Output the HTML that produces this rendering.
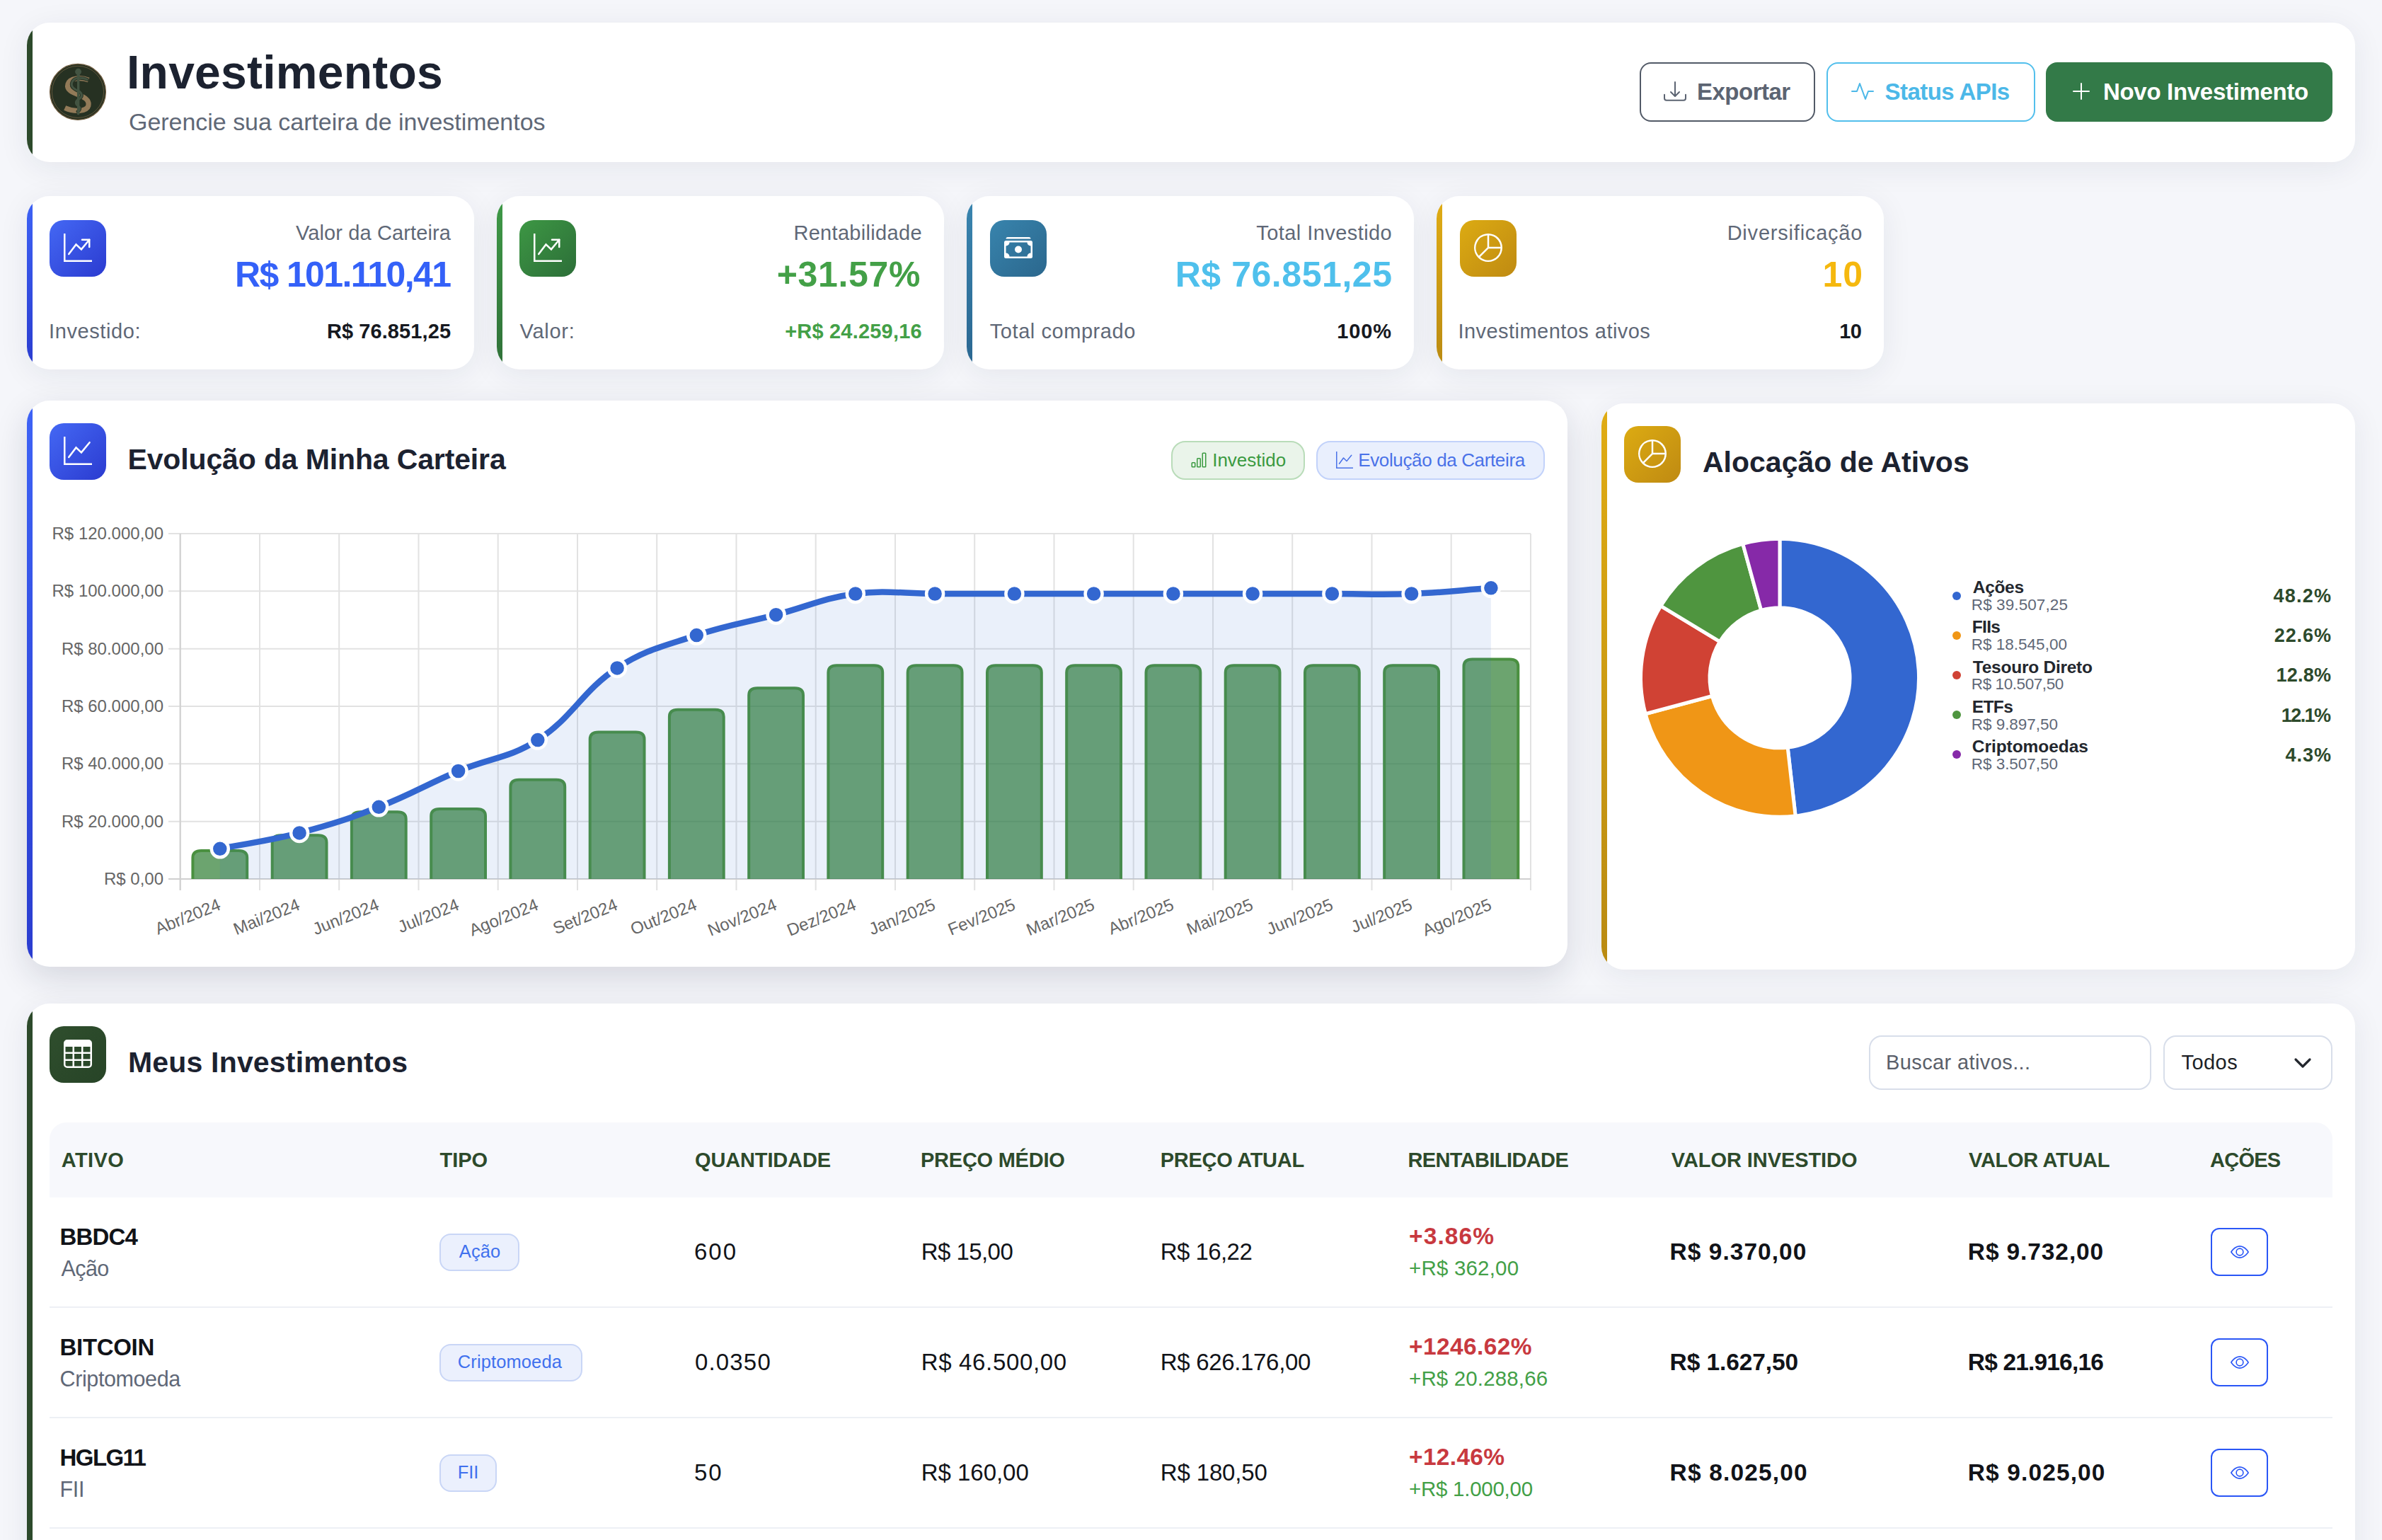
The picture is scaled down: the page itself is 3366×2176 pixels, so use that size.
<!DOCTYPE html>
<html><head><meta charset="utf-8"><style>
html,body{margin:0;padding:0}
body{width:3366px;height:2176px;position:relative;overflow:hidden;background:#f5f6fa;font-family:"Liberation Sans", sans-serif}
.t{position:absolute;white-space:nowrap;font-family:"Liberation Sans", sans-serif}
.abs{position:absolute}
.card{position:absolute;background:#fff;box-shadow:0 8px 44px rgba(30,40,70,0.075);overflow:hidden}
.bl{position:absolute;left:0;top:0;bottom:0;width:8px}
.ib{position:absolute;overflow:hidden}
.btn{position:absolute;box-sizing:border-box;border-radius:16px}
.pill{position:absolute;box-sizing:border-box;border-radius:20px}
.inp{position:absolute;box-sizing:border-box;border:2px solid #d8deea;border-radius:18px;background:#fff}
.badge{position:absolute;box-sizing:border-box;border:2px solid #c9d6f6;background:#ebf0fd;border-radius:16px}
.eye{position:absolute;box-sizing:border-box;border:2.5px solid #2a56f6;border-radius:12px}
.xl{transform-origin:100% 0;transform:rotate(-22deg)}
</style></head><body>
<div class="card" style="left:38px;top:32px;width:3290px;height:197px;border-radius:32px;"><div class="bl" style="background:#2d4a2b"></div></div>
<svg class="abs" style="left:66px;top:85px" width="88" height="88" viewBox="0 0 1540 1540">
<circle cx="770" cy="785" r="690" fill="#263122" stroke="#6f5a3d" stroke-width="22"/>
<circle cx="770" cy="785" r="640" fill="none" stroke="#7d6747" stroke-width="12"/>
<path d="M1035,490 C860,420 575,430 525,590 C480,740 640,800 820,872 C1000,945 1055,1020 1030,1130 C990,1270 690,1290 450,1180" fill="none" stroke="#927a58" stroke-width="125"/>
<path d="M1000,480 C900,430 700,420 640,520 C580,620 640,700 780,760 C880,810 900,900 800,960 C700,1010 700,1090 790,1140 C840,1180 820,1240 770,1270" fill="none" stroke="#263122" stroke-width="85" stroke-linecap="round"/>
<rect x="752" y="330" width="58" height="1020" rx="20" fill="#435442"/>
<circle cx="780" cy="285" r="78" fill="#435442"/>
<rect x="745" y="330" width="72" height="70" rx="20" fill="#435442"/>
<path d="M1000,480 C900,430 700,420 640,520 C580,620 640,700 780,760 C880,810 900,900 800,960 C700,1010 700,1090 790,1140 C840,1180 820,1240 770,1270" fill="none" stroke="#435442" stroke-width="52" stroke-linecap="round"/>
<rect x="752" y="420" width="58" height="930" rx="20" fill="#435442" opacity="0.55"/>
</svg>
<div class="t" style="left:179.0px;top:68.9px;font-size:66px;line-height:66px;font-weight:700;color:#1c2230;letter-spacing:0.24px;">Investimentos</div>
<div class="t" style="left:182.0px;top:155.1px;font-size:34px;line-height:34px;font-weight:400;color:#5f6877;letter-spacing:-0.03px;">Gerencie sua carteira de investimentos</div>
<div class="btn" style="left:2317px;top:88px;width:247.5px;height:84px;border:2px solid #525a67;color:#5c6472"></div>
<svg class="abs" style="left:2350.5px;top:113px" width="32" height="32" viewBox="0 0 16 16"><path fill="#5c6472" d="M.5 9.9a.5.5 0 0 1 .5.5v2.5a1 1 0 0 0 1 1h12a1 1 0 0 0 1-1v-2.5a.5.5 0 0 1 1 0v2.5a2 2 0 0 1-2 2H2a2 2 0 0 1-2-2v-2.5a.5.5 0 0 1 .5-.5z M7.646 11.854a.5.5 0 0 0 .708 0l3-3a.5.5 0 0 0-.708-.708L8.5 10.293V1.5a.5.5 0 0 0-1 0v8.793L5.354 8.146a.5.5 0 1 0-.708.708l3 3z"/></svg>
<div class="t" style="left:2398.0px;top:113.0px;font-size:33px;line-height:33px;font-weight:700;color:#5c6472;letter-spacing:-0.50px;">Exportar</div>
<div class="btn" style="left:2581px;top:88px;width:294.5px;height:84px;border:2px solid #52bfec"></div>
<svg class="abs" style="left:2615.5px;top:112.5px" width="32" height="32" viewBox="0 0 16 16"><path fill="#4cb8e8" d="M6 2a.5.5 0 0 1 .47.33L10 12.036l1.53-4.208A.5.5 0 0 1 12 7.5h3.5a.5.5 0 0 1 0 1h-3.15l-1.88 5.17a.5.5 0 0 1-.94 0L6 3.964 4.47 8.171A.5.5 0 0 1 4 8.5H.5a.5.5 0 0 1 0-1h3.15l1.88-5.17A.5.5 0 0 1 6 2Z"/></svg>
<div class="t" style="left:2663.5px;top:113.0px;font-size:33px;line-height:33px;font-weight:700;color:#4cb8e8;letter-spacing:-0.55px;">Status APIs</div>
<div class="btn" style="left:2891px;top:88px;width:405px;height:84px;background:#337a48"></div>
<svg class="abs" style="left:2925px;top:113px" width="32" height="32" viewBox="0 0 16 16"><path fill="#fff" fill-rule="evenodd" d="M8 2a.5.5 0 0 1 .5.5v5h5a.5.5 0 0 1 0 1h-5v5a.5.5 0 0 1-1 0v-5h-5a.5.5 0 0 1 0-1h5v-5A.5.5 0 0 1 8 2Z"/></svg>
<div class="t" style="left:2972.0px;top:113.0px;font-size:33px;line-height:33px;font-weight:700;color:#fff;letter-spacing:-0.31px;">Novo Investimento</div>
<div class="card" style="left:38px;top:277px;width:632px;height:245px;border-radius:32px;"><div class="bl" style="background:linear-gradient(180deg,#3e63f6,#2a3ccf)"></div></div>
<div class="ib" style="left:70px;top:311px;width:80px;height:80px;border-radius:20px;background:linear-gradient(135deg,#4468f4,#2b3bd0)"><svg width="40" height="40" viewBox="0 0 16 16" style="position:absolute;left:20px;top:19px"><path fill="#fff" d="M0 0h1v15h15v1H0z"/><polyline points="2.88,11.6 7.0,6.15 9.97,8.96 14.5,3.5" fill="none" stroke="#fff" stroke-width="1" stroke-linecap="round" stroke-linejoin="miter"/><polyline points="10.4,3.47 14.5,3.47 14.5,7.63" fill="none" stroke="#fff" stroke-width="1" stroke-linecap="round" stroke-linejoin="round"/></svg></div>
<div class="t" style="right:2728.9px;top:315.4px;font-size:29px;line-height:29px;font-weight:400;color:#5f6877;letter-spacing:0.12px;">Valor da Carteira</div>
<div class="t" style="right:2729.6px;top:362.5px;font-size:50px;line-height:50px;font-weight:700;color:#3461f8;letter-spacing:-1.60px;">R$ 101.110,41</div>
<div class="t" style="left:69.0px;top:454.4px;font-size:29px;line-height:29px;font-weight:400;color:#5f6877;letter-spacing:0.61px;">Investido:</div>
<div class="t" style="right:2728.9px;top:454.4px;font-size:29px;line-height:29px;font-weight:700;color:#16191f;letter-spacing:0.09px;">R$ 76.851,25</div>
<div class="card" style="left:702px;top:277px;width:632px;height:245px;border-radius:32px;"><div class="bl" style="background:linear-gradient(180deg,#3f9a47,#2f7038)"></div></div>
<div class="ib" style="left:734px;top:311px;width:80px;height:80px;border-radius:20px;background:linear-gradient(135deg,#3d9744,#2c6e38)"><svg width="40" height="40" viewBox="0 0 16 16" style="position:absolute;left:20px;top:19px"><path fill="#fff" d="M0 0h1v15h15v1H0z"/><polyline points="2.88,11.6 7.0,6.15 9.97,8.96 14.5,3.5" fill="none" stroke="#fff" stroke-width="1" stroke-linecap="round" stroke-linejoin="miter"/><polyline points="10.4,3.47 14.5,3.47 14.5,7.63" fill="none" stroke="#fff" stroke-width="1" stroke-linecap="round" stroke-linejoin="round"/></svg></div>
<div class="t" style="right:2063.1px;top:315.4px;font-size:29px;line-height:29px;font-weight:400;color:#5f6877;letter-spacing:0.32px;">Rentabilidade</div>
<div class="t" style="right:2064.9px;top:362.5px;font-size:50px;line-height:50px;font-weight:700;color:#43a047;letter-spacing:0.67px;">+31.57%</div>
<div class="t" style="left:734.6px;top:454.4px;font-size:29px;line-height:29px;font-weight:400;color:#5f6877;letter-spacing:0.70px;">Valor:</div>
<div class="t" style="right:2063.2px;top:454.4px;font-size:29px;line-height:29px;font-weight:700;color:#43a047;letter-spacing:0.20px;">+R$ 24.259,16</div>
<div class="card" style="left:1366px;top:277px;width:632px;height:245px;border-radius:32px;"><div class="bl" style="background:linear-gradient(180deg,#3a86b0,#2a6690)"></div></div>
<div class="ib" style="left:1399px;top:311px;width:80px;height:80px;border-radius:20px;background:linear-gradient(135deg,#3884ad,#2b678d)"><svg width="40" height="40" viewBox="0 0 16 16" style="position:absolute;left:20px;top:19.3px"><path fill="#fff" fill-rule="evenodd" d="M1 3a1 1 0 0 1 1-1h12a1 1 0 0 1 1 1H1zm7 8a2 2 0 1 0 0-4 2 2 0 0 0 0 4z M0 5a1 1 0 0 1 1-1h14a1 1 0 0 1 1 1v8a1 1 0 0 1-1 1H1a1 1 0 0 1-1-1V5zm3 0a2 2 0 0 1-2 2v4a2 2 0 0 1 2 2h10a2 2 0 0 1 2-2V7a2 2 0 0 1-2-2H3z"/></svg></div>
<div class="t" style="right:1398.8px;top:315.4px;font-size:29px;line-height:29px;font-weight:400;color:#5f6877;letter-spacing:0.44px;">Total Investido</div>
<div class="t" style="right:1398.4px;top:362.5px;font-size:50px;line-height:50px;font-weight:700;color:#4fc0ec;letter-spacing:0.56px;">R$ 76.851,25</div>
<div class="t" style="left:1398.8px;top:454.4px;font-size:29px;line-height:29px;font-weight:400;color:#5f6877;letter-spacing:0.56px;">Total comprado</div>
<div class="t" style="right:1399.2px;top:454.4px;font-size:29px;line-height:29px;font-weight:700;color:#16191f;letter-spacing:0.83px;">100%</div>
<div class="card" style="left:2030px;top:277px;width:632px;height:245px;border-radius:32px;"><div class="bl" style="background:linear-gradient(180deg,#e0ac14,#b98a12)"></div></div>
<div class="ib" style="left:2063px;top:311px;width:80px;height:80px;border-radius:20px;background:linear-gradient(135deg,#dcab12,#bf8a12)"><svg width="40" height="40" viewBox="0 0 16 16" style="position:absolute;left:20px;top:19.3px"><path fill="#fff" fill-rule="evenodd" d="M7.5 1.018a7 7 0 0 0-4.79 11.566L7.5 7.793V1.018zm1 0V7.5h6.482A7.001 7.001 0 0 0 8.5 1.018zM14.982 8.5H8.207l-4.79 4.79A7 7 0 0 0 14.982 8.5zM0 8a8 8 0 1 1 16 0A8 8 0 0 1 0 8z"/></svg></div>
<div class="t" style="right:733.8px;top:315.4px;font-size:29px;line-height:29px;font-weight:400;color:#5f6877;letter-spacing:0.79px;">Diversificação</div>
<div class="t" style="right:733.0px;top:362.5px;font-size:50px;line-height:50px;font-weight:700;color:#f5b80e;letter-spacing:1.00px;">10</div>
<div class="t" style="left:2060.4px;top:454.4px;font-size:29px;line-height:29px;font-weight:400;color:#5f6877;letter-spacing:0.46px;">Investimentos ativos</div>
<div class="t" style="right:735.4px;top:454.4px;font-size:29px;line-height:29px;font-weight:700;color:#16191f;letter-spacing:-0.40px;">10</div>
<div class="card" style="left:38px;top:566px;width:2177px;height:800px;border-radius:32px;box-shadow:0 16px 48px rgba(20,30,60,0.14)"><div class="bl" style="background:linear-gradient(180deg,#3e63f6,#2a3ccf)"></div></div>
<div class="ib" style="left:70px;top:598px;width:80px;height:80px;border-radius:20px;background:linear-gradient(135deg,#4468f4,#2b3bd0)"><svg width="40" height="40" viewBox="0 0 16 16" style="position:absolute;left:20px;top:19px"><path fill="#fff" d="M0 0h1v15h15v1H0z"/><polyline points="2.88,11.6 7.0,6.15 9.97,8.96 14.64,3.27" fill="none" stroke="#fff" stroke-width="1" stroke-linecap="round" stroke-linejoin="miter"/></svg></div>
<div class="t" style="left:180.5px;top:629.1px;font-size:41px;line-height:41px;font-weight:700;color:#1c2230;letter-spacing:-0.14px;">Evolução da Minha Carteira</div>
<div class="pill" style="left:1655px;top:623px;width:189px;height:54.5px;background:#eaf4ea;border:2px solid #b9dcb9"></div>
<svg class="abs" style="left:1681.7px;top:638px" width="24" height="24" viewBox="0 0 16 16"><path fill="#3a9a40" d="M4 11H2v3h2v-3zm5-4H7v7h2V7zm5-5v12h-2V2h2zm-2-1a1 1 0 0 0-1 1v12a1 1 0 0 0 1 1h2a1 1 0 0 0 1-1V2a1 1 0 0 0-1-1h-2zM6 7a1 1 0 0 1 1-1h2a1 1 0 0 1 1 1v7a1 1 0 0 1-1 1H7a1 1 0 0 1-1-1V7zm-5 4a1 1 0 0 1 1-1h2a1 1 0 0 1 1 1v3a1 1 0 0 1-1 1H2a1 1 0 0 1-1-1v-3z"/></svg>
<div class="t" style="left:1713.2px;top:637.0px;font-size:26px;line-height:26px;font-weight:400;color:#3a9a40;">Investido</div>
<div class="pill" style="left:1860px;top:623px;width:322.5px;height:54.5px;background:#e9effd;border:2px solid #c2d2fa"></div>
<svg class="abs" style="left:1888.4px;top:637.5px" width="24" height="24" viewBox="0 0 16 16"><path fill="#4a72e8" d="M0 0h1v15h15v1H0V0Zm14.817 3.113a.5.5 0 0 1 .07.704l-4.5 5.5a.5.5 0 0 1-.74.037L7.06 6.767l-3.656 5.027a.5.5 0 0 1-.808-.588l4-5.5a.5.5 0 0 1 .758-.06l2.609 2.61 4.15-5.073a.5.5 0 0 1 .704-.07Z"/></svg>
<div class="t" style="left:1919.2px;top:637.0px;font-size:26px;line-height:26px;font-weight:400;color:#4a72e8;letter-spacing:-0.36px;">Evolução da Carteira</div>
<svg class="abs" style="left:0;top:0" width="3366" height="1400" viewBox="0 0 3366 1400">
<line x1="238" y1="1242.0" x2="2163.0" y2="1242.0" stroke="#e2e2e2" stroke-width="2"/>
<line x1="238" y1="1160.7" x2="2163.0" y2="1160.7" stroke="#e2e2e2" stroke-width="2"/>
<line x1="238" y1="1079.3" x2="2163.0" y2="1079.3" stroke="#e2e2e2" stroke-width="2"/>
<line x1="238" y1="998.0" x2="2163.0" y2="998.0" stroke="#e2e2e2" stroke-width="2"/>
<line x1="238" y1="916.7" x2="2163.0" y2="916.7" stroke="#e2e2e2" stroke-width="2"/>
<line x1="238" y1="835.3" x2="2163.0" y2="835.3" stroke="#e2e2e2" stroke-width="2"/>
<line x1="238" y1="754.0" x2="2163.0" y2="754.0" stroke="#e2e2e2" stroke-width="2"/>
<line x1="254.7" y1="754.0" x2="254.7" y2="1258.0" stroke="#e2e2e2" stroke-width="2"/>
<line x1="367.0" y1="754.0" x2="367.0" y2="1258.0" stroke="#e2e2e2" stroke-width="2"/>
<line x1="479.2" y1="754.0" x2="479.2" y2="1258.0" stroke="#e2e2e2" stroke-width="2"/>
<line x1="591.5" y1="754.0" x2="591.5" y2="1258.0" stroke="#e2e2e2" stroke-width="2"/>
<line x1="703.7" y1="754.0" x2="703.7" y2="1258.0" stroke="#e2e2e2" stroke-width="2"/>
<line x1="816.0" y1="754.0" x2="816.0" y2="1258.0" stroke="#e2e2e2" stroke-width="2"/>
<line x1="928.2" y1="754.0" x2="928.2" y2="1258.0" stroke="#e2e2e2" stroke-width="2"/>
<line x1="1040.5" y1="754.0" x2="1040.5" y2="1258.0" stroke="#e2e2e2" stroke-width="2"/>
<line x1="1152.7" y1="754.0" x2="1152.7" y2="1258.0" stroke="#e2e2e2" stroke-width="2"/>
<line x1="1265.0" y1="754.0" x2="1265.0" y2="1258.0" stroke="#e2e2e2" stroke-width="2"/>
<line x1="1377.2" y1="754.0" x2="1377.2" y2="1258.0" stroke="#e2e2e2" stroke-width="2"/>
<line x1="1489.5" y1="754.0" x2="1489.5" y2="1258.0" stroke="#e2e2e2" stroke-width="2"/>
<line x1="1601.7" y1="754.0" x2="1601.7" y2="1258.0" stroke="#e2e2e2" stroke-width="2"/>
<line x1="1714.0" y1="754.0" x2="1714.0" y2="1258.0" stroke="#e2e2e2" stroke-width="2"/>
<line x1="1826.2" y1="754.0" x2="1826.2" y2="1258.0" stroke="#e2e2e2" stroke-width="2"/>
<line x1="1938.5" y1="754.0" x2="1938.5" y2="1258.0" stroke="#e2e2e2" stroke-width="2"/>
<line x1="2050.7" y1="754.0" x2="2050.7" y2="1258.0" stroke="#e2e2e2" stroke-width="2"/>
<line x1="2163.0" y1="754.0" x2="2163.0" y2="1258.0" stroke="#e2e2e2" stroke-width="2"/>
<line x1="254.7" y1="754.0" x2="254.7" y2="1258.0" stroke="#d0d0d0" stroke-width="2"/>
<line x1="238" y1="1242.0" x2="2163.0" y2="1242.0" stroke="#d0d0d0" stroke-width="2"/>
<path d="M272.4,1242.0 V1212.1 Q272.4,1202.1 284.4,1202.1 H337.2 Q349.2,1202.1 349.2,1212.1 V1242.0" fill="rgba(46,125,50,0.7)" stroke="#4a9040" stroke-width="4"/>
<path d="M384.7,1242.0 V1190.2 Q384.7,1180.2 396.7,1180.2 H449.5 Q461.5,1180.2 461.5,1190.2 V1242.0" fill="rgba(46,125,50,0.7)" stroke="#4a9040" stroke-width="4"/>
<path d="M496.9,1242.0 V1157.2 Q496.9,1147.2 508.9,1147.2 H561.7 Q573.7,1147.2 573.7,1157.2 V1242.0" fill="rgba(46,125,50,0.7)" stroke="#4a9040" stroke-width="4"/>
<path d="M609.2,1242.0 V1153.1 Q609.2,1143.1 621.2,1143.1 H674.0 Q686.0,1143.1 686.0,1153.1 V1242.0" fill="rgba(46,125,50,0.7)" stroke="#4a9040" stroke-width="4"/>
<path d="M721.4,1242.0 V1111.7 Q721.4,1101.7 733.4,1101.7 H786.2 Q798.2,1101.7 798.2,1111.7 V1242.0" fill="rgba(46,125,50,0.7)" stroke="#4a9040" stroke-width="4"/>
<path d="M833.7,1242.0 V1044.6 Q833.7,1034.6 845.7,1034.6 H898.5 Q910.5,1034.6 910.5,1044.6 V1242.0" fill="rgba(46,125,50,0.7)" stroke="#4a9040" stroke-width="4"/>
<path d="M945.9,1242.0 V1012.8 Q945.9,1002.8 957.9,1002.8 H1010.7 Q1022.7,1002.8 1022.7,1012.8 V1242.0" fill="rgba(46,125,50,0.7)" stroke="#4a9040" stroke-width="4"/>
<path d="M1058.2,1242.0 V982.3 Q1058.2,972.3 1070.2,972.3 H1123.0 Q1135.0,972.3 1135.0,982.3 V1242.0" fill="rgba(46,125,50,0.7)" stroke="#4a9040" stroke-width="4"/>
<path d="M1170.4,1242.0 V950.2 Q1170.4,940.2 1182.4,940.2 H1235.2 Q1247.2,940.2 1247.2,950.2 V1242.0" fill="rgba(46,125,50,0.7)" stroke="#4a9040" stroke-width="4"/>
<path d="M1282.7,1242.0 V950.2 Q1282.7,940.2 1294.7,940.2 H1347.5 Q1359.5,940.2 1359.5,950.2 V1242.0" fill="rgba(46,125,50,0.7)" stroke="#4a9040" stroke-width="4"/>
<path d="M1395.0,1242.0 V950.2 Q1395.0,940.2 1407.0,940.2 H1459.8 Q1471.8,940.2 1471.8,950.2 V1242.0" fill="rgba(46,125,50,0.7)" stroke="#4a9040" stroke-width="4"/>
<path d="M1507.2,1242.0 V950.2 Q1507.2,940.2 1519.2,940.2 H1572.0 Q1584.0,940.2 1584.0,950.2 V1242.0" fill="rgba(46,125,50,0.7)" stroke="#4a9040" stroke-width="4"/>
<path d="M1619.5,1242.0 V950.2 Q1619.5,940.2 1631.5,940.2 H1684.3 Q1696.3,940.2 1696.3,950.2 V1242.0" fill="rgba(46,125,50,0.7)" stroke="#4a9040" stroke-width="4"/>
<path d="M1731.7,1242.0 V950.2 Q1731.7,940.2 1743.7,940.2 H1796.5 Q1808.5,940.2 1808.5,950.2 V1242.0" fill="rgba(46,125,50,0.7)" stroke="#4a9040" stroke-width="4"/>
<path d="M1844.0,1242.0 V950.2 Q1844.0,940.2 1856.0,940.2 H1908.8 Q1920.8,940.2 1920.8,950.2 V1242.0" fill="rgba(46,125,50,0.7)" stroke="#4a9040" stroke-width="4"/>
<path d="M1956.2,1242.0 V950.2 Q1956.2,940.2 1968.2,940.2 H2021.0 Q2033.0,940.2 2033.0,950.2 V1242.0" fill="rgba(46,125,50,0.7)" stroke="#4a9040" stroke-width="4"/>
<path d="M2068.5,1242.0 V941.5 Q2068.5,931.5 2080.5,931.5 H2133.3 Q2145.3,931.5 2145.3,941.5 V1242.0" fill="rgba(46,125,50,0.7)" stroke="#4a9040" stroke-width="4"/>
<path d="M310.8,1199.3 C355.7,1190.4 378.9,1188.5 423.1,1176.9 C468.7,1165.0 491.4,1157.4 535.3,1140.3 C581.2,1122.5 602.2,1108.7 647.6,1089.5 C692.0,1070.8 720.0,1071.4 759.8,1045.6 C809.8,1013.2 822.3,976.8 872.1,943.9 C912.1,917.6 938.4,913.0 984.3,897.6 C1028.2,882.9 1051.7,880.4 1096.6,868.7 C1141.5,857.0 1163.2,845.0 1208.8,839.0 C1253.0,833.2 1276.2,839.0 1321.1,839.0 C1366.0,839.0 1388.5,839.0 1433.4,839.0 C1478.3,839.0 1500.7,839.0 1545.6,839.0 C1590.5,839.0 1613.0,839.0 1657.9,839.0 C1702.8,839.0 1725.2,839.0 1770.1,839.0 C1815.0,839.0 1837.5,839.0 1882.4,839.0 C1927.3,839.0 1949.8,840.6 1994.6,839.0 C2039.6,837.4 2062.0,834.1 2106.9,830.8 L2106.9,1242.0 L310.8,1242.0 Z" fill="rgba(51,103,207,0.1)"/>
<path d="M310.8,1199.3 C355.7,1190.4 378.9,1188.5 423.1,1176.9 C468.7,1165.0 491.4,1157.4 535.3,1140.3 C581.2,1122.5 602.2,1108.7 647.6,1089.5 C692.0,1070.8 720.0,1071.4 759.8,1045.6 C809.8,1013.2 822.3,976.8 872.1,943.9 C912.1,917.6 938.4,913.0 984.3,897.6 C1028.2,882.9 1051.7,880.4 1096.6,868.7 C1141.5,857.0 1163.2,845.0 1208.8,839.0 C1253.0,833.2 1276.2,839.0 1321.1,839.0 C1366.0,839.0 1388.5,839.0 1433.4,839.0 C1478.3,839.0 1500.7,839.0 1545.6,839.0 C1590.5,839.0 1613.0,839.0 1657.9,839.0 C1702.8,839.0 1725.2,839.0 1770.1,839.0 C1815.0,839.0 1837.5,839.0 1882.4,839.0 C1927.3,839.0 1949.8,840.6 1994.6,839.0 C2039.6,837.4 2062.0,834.1 2106.9,830.8" fill="none" stroke="#3367d0" stroke-width="8.5" stroke-linejoin="round"/>
<circle cx="310.8" cy="1199.3" r="12" fill="#3367d0" stroke="#fff" stroke-width="4.5"/>
<circle cx="423.1" cy="1176.9" r="12" fill="#3367d0" stroke="#fff" stroke-width="4.5"/>
<circle cx="535.3" cy="1140.3" r="12" fill="#3367d0" stroke="#fff" stroke-width="4.5"/>
<circle cx="647.6" cy="1089.5" r="12" fill="#3367d0" stroke="#fff" stroke-width="4.5"/>
<circle cx="759.8" cy="1045.6" r="12" fill="#3367d0" stroke="#fff" stroke-width="4.5"/>
<circle cx="872.1" cy="943.9" r="12" fill="#3367d0" stroke="#fff" stroke-width="4.5"/>
<circle cx="984.3" cy="897.6" r="12" fill="#3367d0" stroke="#fff" stroke-width="4.5"/>
<circle cx="1096.6" cy="868.7" r="12" fill="#3367d0" stroke="#fff" stroke-width="4.5"/>
<circle cx="1208.8" cy="839.0" r="12" fill="#3367d0" stroke="#fff" stroke-width="4.5"/>
<circle cx="1321.1" cy="839.0" r="12" fill="#3367d0" stroke="#fff" stroke-width="4.5"/>
<circle cx="1433.4" cy="839.0" r="12" fill="#3367d0" stroke="#fff" stroke-width="4.5"/>
<circle cx="1545.6" cy="839.0" r="12" fill="#3367d0" stroke="#fff" stroke-width="4.5"/>
<circle cx="1657.9" cy="839.0" r="12" fill="#3367d0" stroke="#fff" stroke-width="4.5"/>
<circle cx="1770.1" cy="839.0" r="12" fill="#3367d0" stroke="#fff" stroke-width="4.5"/>
<circle cx="1882.4" cy="839.0" r="12" fill="#3367d0" stroke="#fff" stroke-width="4.5"/>
<circle cx="1994.6" cy="839.0" r="12" fill="#3367d0" stroke="#fff" stroke-width="4.5"/>
<circle cx="2106.9" cy="830.8" r="12" fill="#3367d0" stroke="#fff" stroke-width="4.5"/>
</svg>
<div class="t" style="right:3135.0px;top:1230.1px;font-size:24px;line-height:24px;font-weight:400;color:#666666;">R$ 0,00</div>
<div class="t" style="right:3135.0px;top:1148.8px;font-size:24px;line-height:24px;font-weight:400;color:#666666;">R$ 20.000,00</div>
<div class="t" style="right:3135.0px;top:1067.4px;font-size:24px;line-height:24px;font-weight:400;color:#666666;">R$ 40.000,00</div>
<div class="t" style="right:3135.0px;top:986.1px;font-size:24px;line-height:24px;font-weight:400;color:#666666;">R$ 60.000,00</div>
<div class="t" style="right:3135.0px;top:904.8px;font-size:24px;line-height:24px;font-weight:400;color:#666666;">R$ 80.000,00</div>
<div class="t" style="right:3135.0px;top:823.4px;font-size:24px;line-height:24px;font-weight:400;color:#666666;">R$ 100.000,00</div>
<div class="t" style="right:3135.0px;top:742.1px;font-size:24px;line-height:24px;font-weight:400;color:#666666;">R$ 120.000,00</div>
<div class="t xl" style="left:-94.1px;top:1265.7px;width:400px;text-align:right;font-size:24px;line-height:24px;color:#666">Abr/2024</div>
<div class="t xl" style="left:18.2px;top:1265.7px;width:400px;text-align:right;font-size:24px;line-height:24px;color:#666">Mai/2024</div>
<div class="t xl" style="left:130.4px;top:1265.7px;width:400px;text-align:right;font-size:24px;line-height:24px;color:#666">Jun/2024</div>
<div class="t xl" style="left:242.7px;top:1265.7px;width:400px;text-align:right;font-size:24px;line-height:24px;color:#666">Jul/2024</div>
<div class="t xl" style="left:354.9px;top:1265.7px;width:400px;text-align:right;font-size:24px;line-height:24px;color:#666">Ago/2024</div>
<div class="t xl" style="left:467.2px;top:1265.7px;width:400px;text-align:right;font-size:24px;line-height:24px;color:#666">Set/2024</div>
<div class="t xl" style="left:579.4px;top:1265.7px;width:400px;text-align:right;font-size:24px;line-height:24px;color:#666">Out/2024</div>
<div class="t xl" style="left:691.7px;top:1265.7px;width:400px;text-align:right;font-size:24px;line-height:24px;color:#666">Nov/2024</div>
<div class="t xl" style="left:803.9px;top:1265.7px;width:400px;text-align:right;font-size:24px;line-height:24px;color:#666">Dez/2024</div>
<div class="t xl" style="left:916.2px;top:1265.7px;width:400px;text-align:right;font-size:24px;line-height:24px;color:#666">Jan/2025</div>
<div class="t xl" style="left:1028.5px;top:1265.7px;width:400px;text-align:right;font-size:24px;line-height:24px;color:#666">Fev/2025</div>
<div class="t xl" style="left:1140.7px;top:1265.7px;width:400px;text-align:right;font-size:24px;line-height:24px;color:#666">Mar/2025</div>
<div class="t xl" style="left:1253.0px;top:1265.7px;width:400px;text-align:right;font-size:24px;line-height:24px;color:#666">Abr/2025</div>
<div class="t xl" style="left:1365.2px;top:1265.7px;width:400px;text-align:right;font-size:24px;line-height:24px;color:#666">Mai/2025</div>
<div class="t xl" style="left:1477.5px;top:1265.7px;width:400px;text-align:right;font-size:24px;line-height:24px;color:#666">Jun/2025</div>
<div class="t xl" style="left:1589.7px;top:1265.7px;width:400px;text-align:right;font-size:24px;line-height:24px;color:#666">Jul/2025</div>
<div class="t xl" style="left:1702.0px;top:1265.7px;width:400px;text-align:right;font-size:24px;line-height:24px;color:#666">Ago/2025</div>
<div class="card" style="left:2263px;top:570px;width:1065px;height:800px;border-radius:32px;"><div class="bl" style="background:linear-gradient(180deg,#e0ac14,#b98a12)"></div></div>
<div class="ib" style="left:2295px;top:602px;width:80px;height:80px;border-radius:20px;background:linear-gradient(135deg,#dcab12,#bf8a12)"><svg width="40" height="40" viewBox="0 0 16 16" style="position:absolute;left:20px;top:19.3px"><path fill="#fff" fill-rule="evenodd" d="M7.5 1.018a7 7 0 0 0-4.79 11.566L7.5 7.793V1.018zm1 0V7.5h6.482A7.001 7.001 0 0 0 8.5 1.018zM14.982 8.5H8.207l-4.79 4.79A7 7 0 0 0 14.982 8.5zM0 8a8 8 0 1 1 16 0A8 8 0 0 1 0 8z"/></svg></div>
<div class="t" style="left:2406.0px;top:632.9px;font-size:41px;line-height:41px;font-weight:700;color:#1c2230;">Alocação de Ativos</div>
<svg class="abs" style="left:0;top:0" width="3366" height="1400" viewBox="0 0 3366 1400">
<path d="M2515.00,761.30 A196.5,196.5 0 0 1 2537.17,1153.05 L2526.17,1056.17 A99.0,99.0 0 0 0 2515.00,858.80 Z" fill="#3367d0" stroke="#fff" stroke-width="5" stroke-linejoin="miter"/>
<path d="M2537.17,1153.05 A196.5,196.5 0 0 1 2325.22,1008.75 L2419.39,983.47 A99.0,99.0 0 0 0 2526.17,1056.17 Z" fill="#f09616" stroke="#fff" stroke-width="5" stroke-linejoin="miter"/>
<path d="M2325.22,1008.75 A196.5,196.5 0 0 1 2346.79,856.23 L2430.25,906.63 A99.0,99.0 0 0 0 2419.39,983.47 Z" fill="#d04234" stroke="#fff" stroke-width="5" stroke-linejoin="miter"/>
<path d="M2346.79,856.23 A196.5,196.5 0 0 1 2462.80,768.36 L2488.70,862.36 A99.0,99.0 0 0 0 2430.25,906.63 Z" fill="#4f953f" stroke="#fff" stroke-width="5" stroke-linejoin="miter"/>
<path d="M2462.80,768.36 A196.5,196.5 0 0 1 2515.00,761.30 L2515.00,858.80 A99.0,99.0 0 0 0 2488.70,862.36 Z" fill="#8629a8" stroke="#fff" stroke-width="5" stroke-linejoin="miter"/>
</svg>
<div class="abs" style="left:2759px;top:835.6px;width:12px;height:12px;border-radius:50%;background:#3367d0"></div>
<div class="t" style="left:2787.8px;top:818.2px;font-size:24.5px;line-height:24.5px;font-weight:700;color:#23272e;letter-spacing:-0.33px;">Ações</div>
<div class="t" style="left:2785.8px;top:843.9px;font-size:22.5px;line-height:22.5px;font-weight:400;color:#5f6877;letter-spacing:0.09px;">R$ 39.507,25</div>
<div class="t" style="right:70.8px;top:829.0px;font-size:27px;line-height:27px;font-weight:700;color:#2d4a2b;letter-spacing:1.25px;">48.2%</div>
<div class="abs" style="left:2759px;top:891.8px;width:12px;height:12px;border-radius:50%;background:#f09616"></div>
<div class="t" style="left:2786.8px;top:874.4px;font-size:24.5px;line-height:24.5px;font-weight:700;color:#23272e;letter-spacing:-0.67px;">FIIs</div>
<div class="t" style="left:2785.8px;top:900.1px;font-size:22.5px;line-height:22.5px;font-weight:400;color:#5f6877;">R$ 18.545,00</div>
<div class="t" style="right:71.1px;top:885.2px;font-size:27px;line-height:27px;font-weight:700;color:#2d4a2b;letter-spacing:0.92px;">22.6%</div>
<div class="abs" style="left:2759px;top:948.0px;width:12px;height:12px;border-radius:50%;background:#d04234"></div>
<div class="t" style="left:2787.8px;top:930.6px;font-size:24.5px;line-height:24.5px;font-weight:700;color:#23272e;letter-spacing:-0.25px;">Tesouro Direto</div>
<div class="t" style="left:2785.8px;top:956.3px;font-size:22.5px;line-height:22.5px;font-weight:400;color:#5f6877;letter-spacing:-0.42px;">R$ 10.507,50</div>
<div class="t" style="right:71.8px;top:941.4px;font-size:27px;line-height:27px;font-weight:700;color:#2d4a2b;letter-spacing:0.25px;">12.8%</div>
<div class="abs" style="left:2759px;top:1004.2px;width:12px;height:12px;border-radius:50%;background:#4f953f"></div>
<div class="t" style="left:2786.8px;top:986.8px;font-size:24.5px;line-height:24.5px;font-weight:700;color:#23272e;letter-spacing:-0.63px;">ETFs</div>
<div class="t" style="left:2785.8px;top:1012.5px;font-size:22.5px;line-height:22.5px;font-weight:400;color:#5f6877;letter-spacing:-0.04px;">R$ 9.897,50</div>
<div class="t" style="right:73.6px;top:997.6px;font-size:27px;line-height:27px;font-weight:700;color:#2d4a2b;letter-spacing:-1.60px;">12.1%</div>
<div class="abs" style="left:2759px;top:1060.4px;width:12px;height:12px;border-radius:50%;background:#8629a8"></div>
<div class="t" style="left:2786.8px;top:1043.0px;font-size:24.5px;line-height:24.5px;font-weight:700;color:#23272e;letter-spacing:-0.05px;">Criptomoedas</div>
<div class="t" style="left:2785.8px;top:1068.7px;font-size:22.5px;line-height:22.5px;font-weight:400;color:#5f6877;letter-spacing:-0.04px;">R$ 3.507,50</div>
<div class="t" style="right:71.0px;top:1053.8px;font-size:27px;line-height:27px;font-weight:700;color:#2d4a2b;letter-spacing:1.00px;">4.3%</div>
<div class="card" style="left:38px;top:1418px;width:3290px;height:982px;border-radius:32px;"><div class="bl" style="background:#2d4a2b"></div></div>
<div class="ib" style="left:70px;top:1450px;width:80px;height:80px;border-radius:20px;background:linear-gradient(135deg,#2f4e2d,#274427)"><svg width="40" height="40" viewBox="0 0 16 16" style="position:absolute;left:20px;top:19.3px"><path fill="#fff" fill-rule="evenodd" d="M0 2a2 2 0 0 1 2-2h12a2 2 0 0 1 2 2v12a2 2 0 0 1-2 2H2a2 2 0 0 1-2-2V2zm15 2h-4v3h4V4zm0 4h-4v3h4V8zm0 4h-4v3h3a1 1 0 0 0 1-1v-2zm-5 3v-3H6v3h4zm-5 0v-3H1v2a1 1 0 0 0 1 1h3zm-4-4h4V8H1v3zm0-4h4V4H1v3zm5-3v3h4V4H6zm4 4H6v3h4V8z"/></svg></div>
<div class="t" style="left:181.0px;top:1481.2px;font-size:41px;line-height:41px;font-weight:700;color:#1c2230;letter-spacing:0.18px;">Meus Investimentos</div>
<div class="inp" style="left:2640.5px;top:1463px;width:399px;height:77px"></div>
<div class="t" style="left:2665.0px;top:1486.9px;font-size:29px;line-height:29px;font-weight:400;color:#5a606a;letter-spacing:0.39px;">Buscar ativos...</div>
<div class="inp" style="left:3056.5px;top:1463px;width:239px;height:77px"></div>
<div class="t" style="left:3082.6px;top:1486.9px;font-size:29px;line-height:29px;font-weight:400;color:#1c1f26;letter-spacing:0.42px;">Todos</div>
<svg class="abs" style="left:3240px;top:1490px" width="28" height="24" viewBox="0 0 28 24"><path d="M4 7 L14 17 L24 7" fill="none" stroke="#23272e" stroke-width="3.2" stroke-linecap="round" stroke-linejoin="round"/></svg>
<div class="abs" style="left:70px;top:1586px;width:3226px;height:105.5px;background:#f7f8fc;border-radius:24px 24px 0 0"></div>
<div class="t" style="left:86.7px;top:1624.6px;font-size:29px;line-height:29px;font-weight:700;color:#2d4a2b;letter-spacing:0.40px;">ATIVO</div>
<div class="t" style="left:621.5px;top:1624.6px;font-size:29px;line-height:29px;font-weight:700;color:#2d4a2b;letter-spacing:-0.03px;">TIPO</div>
<div class="t" style="left:982.0px;top:1624.6px;font-size:29px;line-height:29px;font-weight:700;color:#2d4a2b;letter-spacing:-0.14px;">QUANTIDADE</div>
<div class="t" style="left:1301.0px;top:1624.6px;font-size:29px;line-height:29px;font-weight:700;color:#2d4a2b;letter-spacing:-0.25px;">PREÇO MÉDIO</div>
<div class="t" style="left:1639.8px;top:1624.6px;font-size:29px;line-height:29px;font-weight:700;color:#2d4a2b;letter-spacing:-0.29px;">PREÇO ATUAL</div>
<div class="t" style="left:1989.4px;top:1624.6px;font-size:29px;line-height:29px;font-weight:700;color:#2d4a2b;letter-spacing:-0.61px;">RENTABILIDADE</div>
<div class="t" style="left:2361.8px;top:1624.6px;font-size:29px;line-height:29px;font-weight:700;color:#2d4a2b;letter-spacing:-0.07px;">VALOR INVESTIDO</div>
<div class="t" style="left:2782.0px;top:1624.6px;font-size:29px;line-height:29px;font-weight:700;color:#2d4a2b;letter-spacing:-0.30px;">VALOR ATUAL</div>
<div class="t" style="left:3123.0px;top:1624.6px;font-size:29px;line-height:29px;font-weight:700;color:#2d4a2b;letter-spacing:-0.75px;">AÇÕES</div>
<div class="t" style="left:84.6px;top:1731.0px;font-size:33px;line-height:33px;font-weight:700;color:#111318;letter-spacing:-0.85px;">BBDC4</div>
<div class="t" style="left:86.6px;top:1777.1px;font-size:30.5px;line-height:30.5px;font-weight:400;color:#5f6877;letter-spacing:-0.60px;">Ação</div>
<div class="badge" style="left:621px;top:1743.2px;width:113px;height:52.4px"></div>
<div class="t" style="left:648.8px;top:1755.5px;font-size:25.5px;line-height:25.5px;font-weight:400;color:#4070ee;letter-spacing:0.07px;">Ação</div>
<div class="t" style="left:981.0px;top:1752.0px;font-size:33px;line-height:33px;font-weight:400;color:#111318;letter-spacing:2.00px;">600</div>
<div class="t" style="left:1301.8px;top:1752.0px;font-size:33px;line-height:33px;font-weight:400;color:#111318;letter-spacing:-0.57px;">R$ 15,00</div>
<div class="t" style="left:1639.8px;top:1752.0px;font-size:33px;line-height:33px;font-weight:400;color:#111318;letter-spacing:-0.57px;">R$ 16,22</div>
<div class="t" style="left:1991.0px;top:1730.0px;font-size:33.5px;line-height:33.5px;font-weight:700;color:#c8393f;letter-spacing:1.12px;">+3.86%</div>
<div class="t" style="left:1991.0px;top:1777.3px;font-size:29.5px;line-height:29.5px;font-weight:400;color:#43a047;letter-spacing:0.19px;">+R$ 362,00</div>
<div class="t" style="left:2359.6px;top:1751.5px;font-size:33.5px;line-height:33.5px;font-weight:700;color:#111318;letter-spacing:1.02px;">R$ 9.370,00</div>
<div class="t" style="left:2780.8px;top:1751.5px;font-size:33.5px;line-height:33.5px;font-weight:700;color:#111318;letter-spacing:0.89px;">R$ 9.732,00</div>
<div class="eye" style="left:3124px;top:1735.2px;width:81px;height:67.6px"></div>
<svg class="abs" style="left:3151.5px;top:1755.5px" width="26" height="26" viewBox="0 0 16 16"><path fill="#2a56f6" d="M16 8s-3-5.5-8-5.5S0 8 0 8s3 5.5 8 5.5S16 8 16 8zM1.173 8a13.133 13.133 0 0 1 1.66-2.043C4.12 4.668 5.88 3.5 8 3.5c2.12 0 3.879 1.168 5.168 2.457A13.133 13.133 0 0 1 14.828 8c-.058.087-.122.183-.195.288-.335.48-.83 1.12-1.465 1.755C11.879 11.332 10.119 12.5 8 12.5c-2.12 0-3.879-1.168-5.168-2.457A13.134 13.134 0 0 1 1.172 8z"/><path fill="#2a56f6" d="M8 5.5a2.5 2.5 0 1 0 0 5 2.5 2.5 0 0 0 0-5zM4.5 8a3.5 3.5 0 1 1 7 0 3.5 3.5 0 0 1-7 0z"/></svg>
<div class="abs" style="left:70px;top:1846.0px;width:3226px;height:2px;background:#edf0f5"></div>
<div class="t" style="left:84.6px;top:1887.0px;font-size:33px;line-height:33px;font-weight:700;color:#111318;letter-spacing:-0.33px;">BITCOIN</div>
<div class="t" style="left:84.6px;top:1933.1px;font-size:30.5px;line-height:30.5px;font-weight:400;color:#5f6877;letter-spacing:-0.40px;">Criptomoeda</div>
<div class="badge" style="left:621px;top:1899.2px;width:202px;height:52.4px"></div>
<div class="t" style="left:646.8px;top:1911.5px;font-size:25.5px;line-height:25.5px;font-weight:400;color:#4070ee;letter-spacing:0.11px;">Criptomoeda</div>
<div class="t" style="left:982.0px;top:1908.0px;font-size:33px;line-height:33px;font-weight:400;color:#111318;letter-spacing:1.16px;">0.0350</div>
<div class="t" style="left:1301.8px;top:1908.0px;font-size:33px;line-height:33px;font-weight:400;color:#111318;letter-spacing:0.65px;">R$ 46.500,00</div>
<div class="t" style="left:1639.8px;top:1908.0px;font-size:33px;line-height:33px;font-weight:400;color:#111318;letter-spacing:-0.33px;">R$ 626.176,00</div>
<div class="t" style="left:1991.0px;top:1886.0px;font-size:33.5px;line-height:33.5px;font-weight:700;color:#c8393f;letter-spacing:0.40px;">+1246.62%</div>
<div class="t" style="left:1991.0px;top:1933.3px;font-size:29.5px;line-height:29.5px;font-weight:400;color:#43a047;letter-spacing:0.15px;">+R$ 20.288,66</div>
<div class="t" style="left:2359.6px;top:1907.5px;font-size:33.5px;line-height:33.5px;font-weight:700;color:#111318;letter-spacing:-0.10px;">R$ 1.627,50</div>
<div class="t" style="left:2780.8px;top:1907.5px;font-size:33.5px;line-height:33.5px;font-weight:700;color:#111318;letter-spacing:-0.83px;">R$ 21.916,16</div>
<div class="eye" style="left:3124px;top:1891.2px;width:81px;height:67.6px"></div>
<svg class="abs" style="left:3151.5px;top:1911.5px" width="26" height="26" viewBox="0 0 16 16"><path fill="#2a56f6" d="M16 8s-3-5.5-8-5.5S0 8 0 8s3 5.5 8 5.5S16 8 16 8zM1.173 8a13.133 13.133 0 0 1 1.66-2.043C4.12 4.668 5.88 3.5 8 3.5c2.12 0 3.879 1.168 5.168 2.457A13.133 13.133 0 0 1 14.828 8c-.058.087-.122.183-.195.288-.335.48-.83 1.12-1.465 1.755C11.879 11.332 10.119 12.5 8 12.5c-2.12 0-3.879-1.168-5.168-2.457A13.134 13.134 0 0 1 1.172 8z"/><path fill="#2a56f6" d="M8 5.5a2.5 2.5 0 1 0 0 5 2.5 2.5 0 0 0 0-5zM4.5 8a3.5 3.5 0 1 1 7 0 3.5 3.5 0 0 1-7 0z"/></svg>
<div class="abs" style="left:70px;top:2002.0px;width:3226px;height:2px;background:#edf0f5"></div>
<div class="t" style="left:84.6px;top:2043.0px;font-size:33px;line-height:33px;font-weight:700;color:#111318;letter-spacing:-1.60px;">HGLG11</div>
<div class="t" style="left:84.6px;top:2089.1px;font-size:30.5px;line-height:30.5px;font-weight:400;color:#5f6877;letter-spacing:-0.40px;">FII</div>
<div class="badge" style="left:621px;top:2055.2px;width:81px;height:52.4px"></div>
<div class="t" style="left:646.8px;top:2067.5px;font-size:25.5px;line-height:25.5px;font-weight:400;color:#4070ee;letter-spacing:-0.10px;">FII</div>
<div class="t" style="left:981.0px;top:2063.9px;font-size:33px;line-height:33px;font-weight:400;color:#111318;letter-spacing:2.00px;">50</div>
<div class="t" style="left:1301.8px;top:2063.9px;font-size:33px;line-height:33px;font-weight:400;color:#111318;letter-spacing:-0.04px;">R$ 160,00</div>
<div class="t" style="left:1639.8px;top:2063.9px;font-size:33px;line-height:33px;font-weight:400;color:#111318;letter-spacing:-0.15px;">R$ 180,50</div>
<div class="t" style="left:1991.0px;top:2042.0px;font-size:33.5px;line-height:33.5px;font-weight:700;color:#c8393f;letter-spacing:0.32px;">+12.46%</div>
<div class="t" style="left:1991.0px;top:2089.3px;font-size:29.5px;line-height:29.5px;font-weight:400;color:#43a047;letter-spacing:-0.26px;">+R$ 1.000,00</div>
<div class="t" style="left:2359.6px;top:2063.5px;font-size:33.5px;line-height:33.5px;font-weight:700;color:#111318;letter-spacing:1.16px;">R$ 8.025,00</div>
<div class="t" style="left:2780.8px;top:2063.5px;font-size:33.5px;line-height:33.5px;font-weight:700;color:#111318;letter-spacing:1.11px;">R$ 9.025,00</div>
<div class="eye" style="left:3124px;top:2047.2px;width:81px;height:67.6px"></div>
<svg class="abs" style="left:3151.5px;top:2067.5px" width="26" height="26" viewBox="0 0 16 16"><path fill="#2a56f6" d="M16 8s-3-5.5-8-5.5S0 8 0 8s3 5.5 8 5.5S16 8 16 8zM1.173 8a13.133 13.133 0 0 1 1.66-2.043C4.12 4.668 5.88 3.5 8 3.5c2.12 0 3.879 1.168 5.168 2.457A13.133 13.133 0 0 1 14.828 8c-.058.087-.122.183-.195.288-.335.48-.83 1.12-1.465 1.755C11.879 11.332 10.119 12.5 8 12.5c-2.12 0-3.879-1.168-5.168-2.457A13.134 13.134 0 0 1 1.172 8z"/><path fill="#2a56f6" d="M8 5.5a2.5 2.5 0 1 0 0 5 2.5 2.5 0 0 0 0-5zM4.5 8a3.5 3.5 0 1 1 7 0 3.5 3.5 0 0 1-7 0z"/></svg>
<div class="abs" style="left:70px;top:2158.0px;width:3226px;height:2px;background:#edf0f5"></div>
</body></html>
